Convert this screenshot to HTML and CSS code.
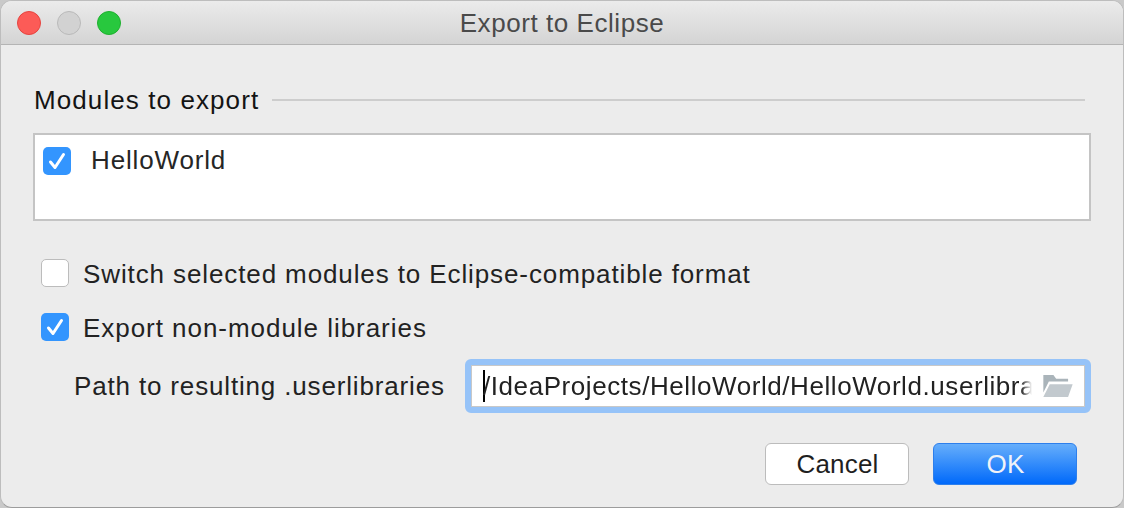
FILE: index.html
```html
<!DOCTYPE html>
<html lang="en">
<head>
<meta charset="utf-8">
<title>Export to Eclipse</title>
<link rel="stylesheet" href="styles.css">
</head>
<body>
<div class="window">
  <header class="titlebar">
    <div class="lights">
      <span class="light red"></span>
      <span class="light grey"></span>
      <span class="light green"></span>
    </div>
    <div class="title">Export to Eclipse</div>
  </header>
  <main class="content">
    <div class="group-head">
      <span class="group-title">Modules to export</span>
      <span class="group-rule"></span>
    </div>
    <div class="listbox">
      <div class="list-row">
        <span class="check on"><svg viewBox="0 0 28 28"><path d="M7.5 15 L12 20.5 L20.5 7.5" /></svg></span>
        <span class="list-label">HelloWorld</span>
      </div>
    </div>
    <div class="option first">
      <span class="check off"></span>
      <span class="opt-label switch-label">Switch selected modules to Eclipse-compatible format</span>
    </div>
    <div class="option second">
      <span class="check on"><svg viewBox="0 0 28 28"><path d="M7.5 15 L12 20.5 L20.5 7.5" /></svg></span>
      <span class="opt-label export-label">Export non-module libraries</span>
    </div>
    <div class="path-row">
      <span class="path-label">Path to resulting .userlibraries</span>
      <div class="field">
        <span class="caret"></span>
        <span class="field-text">/IdeaProjects/HelloWorld/HelloWorld.userlibraries</span>
        <svg class="folder" viewBox="0 0 32 24"><path class="folder-back" d="M0 0 H11 L14 4 H27 V7 H6 L0 19 Z"/><path class="folder-front" d="M7 10 H32 L27 24 H0 Z"/></svg>
      </div>
    </div>
    <div class="buttons">
      <button class="btn cancel">Cancel</button>
      <button class="btn ok">OK</button>
    </div>
  </main>
</div>
</body>
</html>
```
FILE: styles.css
```css
* { box-sizing: border-box; }
html, body { margin: 0; padding: 0; background: #c9c9c9; }
body { width: 1124px; height: 508px; overflow: hidden; font-family: "Liberation Sans", Arial, sans-serif; color: #1f1f1f; }
.window { width: 1124px; height: 508px; background: #ececec; border-radius: 12px; border: 1px solid #bdbdbd; border-bottom-color: #9c9c9c; overflow: hidden; display: flex; flex-direction: column; }
.titlebar { height: 44px; flex: none; position: relative; background: linear-gradient(#ebebeb, #d4d4d4); border-bottom: 1px solid #b4b4b4; display: flex; align-items: center; justify-content: center; }
.lights { position: absolute; left: 16px; top: 10px; display: flex; gap: 16px; }
.light { width: 24px; height: 24px; border-radius: 50%; border: 1px solid; display: block; }
.red { background: #fc5b57; border-color: #e5443f; }
.grey { background: #d2d2d2; border-color: #b9b9b9; }
.green { background: #28c83e; border-color: #1fb02f; }
.title { font-size: 26px; color: #4a4a4a; letter-spacing: 0.56px; padding-top: 1px; }
.content { flex: 1; padding: 0 32px; display: flex; flex-direction: column; }
.group-head { display: flex; align-items: center; gap: 13px; margin-top: 40px; height: 30px; padding-left: 1px; padding-right: 6px; }
.group-title { font-size: 26px; letter-spacing: 1.09px; white-space: nowrap; color: #141414; }
.group-rule { flex: 1; height: 2px; background: #cdcdcd; }
.listbox { margin-top: 18px; height: 88px; background: #fff; border: 2px solid #c4c4c4; padding: 10px 8px; }
.list-row { display: flex; align-items: center; gap: 20px; }
.list-label { font-size: 26px; letter-spacing: 0.85px; color: #262626; }
.check { width: 28px; height: 28px; border-radius: 5px; display: block; flex: none; }
.check.on { background: #3395fe; }
.check.off { background: #fff; border: 1.5px solid #bcbcbc; }
.check svg { display: block; width: 28px; height: 28px; fill: none; stroke: #fff; stroke-width: 3; stroke-linecap: round; stroke-linejoin: round; }
.option { display: flex; align-items: center; gap: 14px; height: 28px; padding-left: 8px; }
.option.first { margin-top: 38px; }
.option.second { margin-top: 26px; }
.opt-label { font-size: 26px; color: #222; white-space: nowrap; padding-top: 2px; }
.switch-label { letter-spacing: 0.89px; }
.export-label { letter-spacing: 0.96px; }
.path-row { display: flex; align-items: center; margin-top: 18px; height: 54px; padding-left: 41px; }
.path-label { font-size: 26px; letter-spacing: 0.84px; color: #222; white-space: nowrap; width: 391px; flex: none; }
.field { width: 626px; height: 54px; flex: none; background: #fff; border: 6px solid #96c3f8; border-radius: 6px; box-shadow: inset 0 0 0 1px #c8c8c8; display: flex; align-items: center; padding-left: 12px; position: relative; overflow: hidden; }
.caret { width: 2px; height: 32px; background: #000; flex: none; margin-right: -2px; }
.field-text { font-size: 26px; letter-spacing: 0.57px; color: #222; white-space: nowrap; overflow: hidden; width: 549px; flex: none; -webkit-mask-image: linear-gradient(to right, #000 98%, transparent); mask-image: linear-gradient(to right, #000 98%, transparent); }
.folder { width: 30px; height: 22px; position: absolute; right: 12px; top: 10px; }
.folder-back { fill: #aab4ba; }
.folder-front { fill: #c2c9ce; }
.buttons { display: flex; justify-content: flex-end; gap: 24px; margin-top: 30px; padding-right: 14px; }
.btn { width: 144px; height: 42px; border-radius: 6px; font: 26px "Liberation Sans", Arial, sans-serif; letter-spacing: 0.2px; padding: 0 0 0 1px; }
.cancel { background: #fff; border: 1px solid #bcbcbc; color: #1f1f1f; }
.ok { background: linear-gradient(#66aefb, #0069fa); border: 1px solid #2d7fec; color: #f0f3f8; }
```
